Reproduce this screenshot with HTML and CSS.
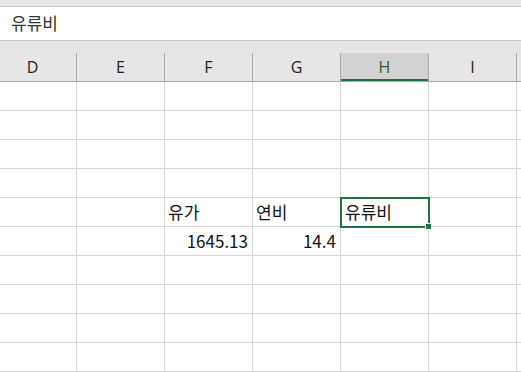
FILE: index.html
```html
<!DOCTYPE html>
<html lang="ko">
<head>
    <meta charset="UTF-8">
    <meta name="viewport" content="width=device-width, initial-scale=1.0">
    <title>Sheet</title>
    <link rel="stylesheet" href="styles.css">
</head>
<body>
    <div class="top-strip"></div>
    <div class="formula-bar">유류비</div>

    <div class="head-area">
        <div class="col-heads">
            <div class="col-head">D</div>
            <div class="col-head">E</div>
            <div class="col-head">F</div>
            <div class="col-head">G</div>
            <div class="col-head active">H</div>
            <div class="col-head">I</div>
            <div class="col-head"></div>
        </div>
    </div>

    <div class="grid">
        <!-- row 1 -->
        <div class="cell"></div><div class="cell"></div><div class="cell"></div><div class="cell"></div><div class="cell"></div><div class="cell"></div><div class="cell"></div>
        <!-- row 2 -->
        <div class="cell"></div><div class="cell"></div><div class="cell"></div><div class="cell"></div><div class="cell"></div><div class="cell"></div><div class="cell"></div>
        <!-- row 3 -->
        <div class="cell"></div><div class="cell"></div><div class="cell"></div><div class="cell"></div><div class="cell"></div><div class="cell"></div><div class="cell"></div>
        <!-- row 4 -->
        <div class="cell"></div><div class="cell"></div><div class="cell"></div><div class="cell"></div><div class="cell"></div><div class="cell"></div><div class="cell"></div>
        <!-- row 5 -->
        <div class="cell"></div><div class="cell"></div>
        <div class="cell">유가</div>
        <div class="cell">연비</div>
        <div class="cell selected">유류비</div>
        <div class="cell"></div><div class="cell"></div>
        <!-- row 6 -->
        <div class="cell"></div><div class="cell"></div>
        <div class="cell num">1645.13</div>
        <div class="cell num">14.4</div>
        <div class="cell"></div><div class="cell"></div><div class="cell"></div>
        <!-- row 7 -->
        <div class="cell"></div><div class="cell"></div><div class="cell"></div><div class="cell"></div><div class="cell"></div><div class="cell"></div><div class="cell"></div>
        <!-- row 8 -->
        <div class="cell"></div><div class="cell"></div><div class="cell"></div><div class="cell"></div><div class="cell"></div><div class="cell"></div><div class="cell"></div>
        <!-- row 9 -->
        <div class="cell"></div><div class="cell"></div><div class="cell"></div><div class="cell"></div><div class="cell"></div><div class="cell"></div><div class="cell"></div>
        <!-- row 10 -->
        <div class="cell"></div><div class="cell"></div><div class="cell"></div><div class="cell"></div><div class="cell"></div><div class="cell"></div><div class="cell"></div>
    </div>
</body>
</html>
```

FILE: styles.css
```css
html, body {
    margin: 0;
    padding: 0;
    overflow: hidden;
    background: #fff;
}
body {
    font-family: "Noto Sans CJK KR", "Noto Sans", sans-serif;
    color: #111;
    width: 521px;
    height: 373px;
}
.top-strip {
    height: 6px;
    background: #e6e6e6;
    border-bottom: 1px solid #c6c6c6;
}
.formula-bar {
    height: 33px;
    line-height: 31px;
    padding-left: 11px;
    font-size: 17px;
    color: #333;
    background: #fff;
    border-bottom: 1px solid #c6c6c6;
}
.head-area {
    background: #e6e6e6;
    padding-top: 12px;
    border-bottom: 1px solid #a6a6a6;
}
.col-heads {
    display: grid;
    grid-template-columns: repeat(6, 88px) 16px;
    margin-left: -11px;
}
.col-head {
    height: 28px;
    line-height: 28px;
    text-align: center;
    font-family: "Open Sans", "Noto Sans", sans-serif;
    font-size: 16px;
    color: #222;
    border-right: 1px solid #ababab;
    box-sizing: border-box;
}
.col-head.active {
    background: #d2d2d2;
    color: #1d5e38;
    box-shadow: inset 0 -2px 0 #217346;
    margin-left: -1px;
    border-left: 1px solid #ababab;
}
.grid {
    display: grid;
    grid-template-columns: repeat(6, 88px) 16px;
    grid-auto-rows: 29px;
    margin-left: -11px;
}
.cell {
    position: relative;
    border-right: 1px solid #d4d4d4;
    border-bottom: 1px solid #d4d4d4;
    box-sizing: border-box;
    padding: 0 4px 0 3px;
    font-size: 17px;
    line-height: 28px;
    white-space: nowrap;
}
.cell.num {
    text-align: right;
    font-size: 17px;
}
.cell.selected {
    outline: 2px solid #217346;
    outline-offset: -1px;
    z-index: 1;
    padding-left: 4px;
}
.cell.selected::after {
    content: "";
    position: absolute;
    right: -4px;
    bottom: -4px;
    width: 5px;
    height: 5px;
    background: #217346;
    border: 1px solid #fff;
}
```
